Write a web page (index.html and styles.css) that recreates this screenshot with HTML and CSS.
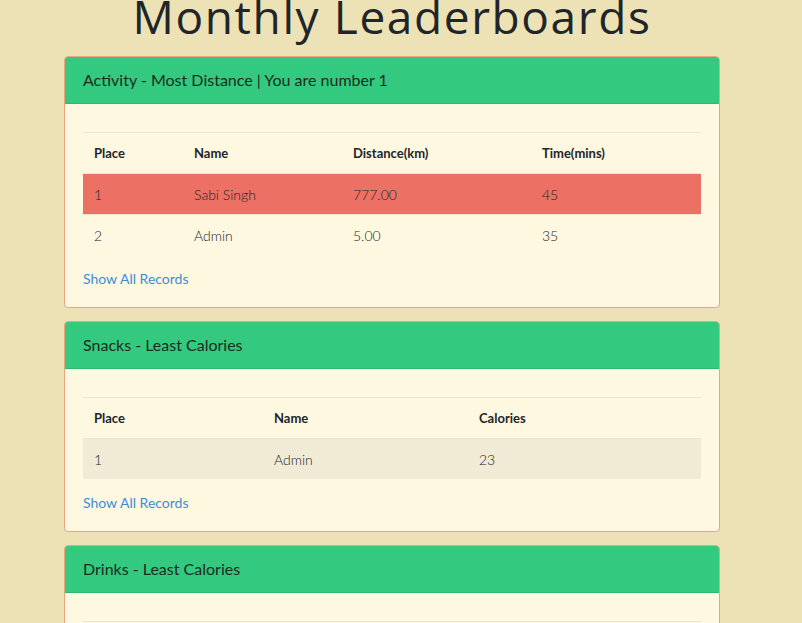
FILE: index.html
```html
<!DOCTYPE html>
<html>
<head>
<meta charset="utf-8">
<link rel="stylesheet" href="styles.css">
</head>
<body>
<main class="page">
  <h1 class="title">Monthly Leaderboards</h1>

  <section class="card">
    <div class="card-header">Activity - Most Distance | You are number 1</div>
    <div class="card-body">
      <table class="board">
        <colgroup><col style="width:100px"><col style="width:159px"><col style="width:189px"><col style="width:170px"></colgroup>
        <thead><tr><th>Place</th><th>Name</th><th>Distance(km)</th><th>Time(mins)</th></tr></thead>
        <tbody>
          <tr class="me"><td>1</td><td>Sabi Singh</td><td>777.00</td><td>45</td></tr>
          <tr><td>2</td><td>Admin</td><td>5.00</td><td>35</td></tr>
        </tbody>
      </table>
      <a class="more" href="#">Show All Records</a>
    </div>
  </section>

  <section class="card">
    <div class="card-header">Snacks - Least Calories</div>
    <div class="card-body">
      <table class="board">
        <colgroup><col style="width:180px"><col style="width:205px"><col style="width:233px"></colgroup>
        <thead><tr><th>Place</th><th>Name</th><th>Calories</th></tr></thead>
        <tbody>
          <tr class="odd"><td>1</td><td>Admin</td><td>23</td></tr>
        </tbody>
      </table>
      <a class="more" href="#">Show All Records</a>
    </div>
  </section>

  <section class="card">
    <div class="card-header">Drinks - Least Calories</div>
    <div class="card-body">
      <table class="board">
        <colgroup><col style="width:180px"><col style="width:205px"><col style="width:233px"></colgroup>
        <thead><tr><th>Place</th><th>Name</th><th>Calories</th></tr></thead>
        <tbody>
          <tr class="odd"><td>1</td><td>Admin</td><td>23</td></tr>
        </tbody>
      </table>
      <a class="more" href="#">Show All Records</a>
    </div>
  </section>
</main>
</body>
</html>
```
FILE: styles.css
```css
html, body {
  margin: 0;
  padding: 0;
  background: #ece2b5;
  overflow: hidden;
}
body {
  font-family: "Lato", "Open Sans", sans-serif;
  color: #212529;
}
.page {
  width: 656px;
  margin-left: 64px;
  display: flex;
  flex-direction: column;
  gap: 13px;
}
.title {
  margin: -13px 0 -2px 0;
  text-align: center;
  font-family: "Open Sans", "Lato", sans-serif;
  font-weight: 400;
  font-size: 46px;
  letter-spacing: 1.6px;
  line-height: 58px;
  color: #212529;
}
.card {
  background: #fff8e1;
  border: 1px solid #eba57c;
  border-radius: 4px;
  overflow: hidden;
}
.card-header {
  background: #33c97f;
  border-bottom: 1px solid #2eb872;
  padding: 0 18px;
  height: 46px;
  line-height: 46px;
  font-size: 16px;
  color: #1e2b22;
}
.card-body {
  padding: 28px 18px 18px 18px;
}
.board {
  width: 618px;
  border-collapse: collapse;
  table-layout: fixed;
  font-size: 14px;
}
.board th, .board td {
  text-align: left;
  padding: 0 11px;
  height: 40px;
  border-top: 1px solid #ebe5cf;
}
.board th {
  font-weight: 700;
  font-size: 13px;
}
.board td {
  font-weight: 300;
}
.board thead th {
  border-bottom: 1px solid #ebe5cf;
}
.board tr.me td {
  background: #ed7064;
  border-top-color: #ed7064;
}
.board tr.odd td {
  background: #f1ebd6;
}
.more {
  display: block;
  margin-top: 14px;
  line-height: 20px;
  font-size: 14px;
  color: #3a8ddb;
  text-decoration: none;
  font-weight: 400;
}
```
